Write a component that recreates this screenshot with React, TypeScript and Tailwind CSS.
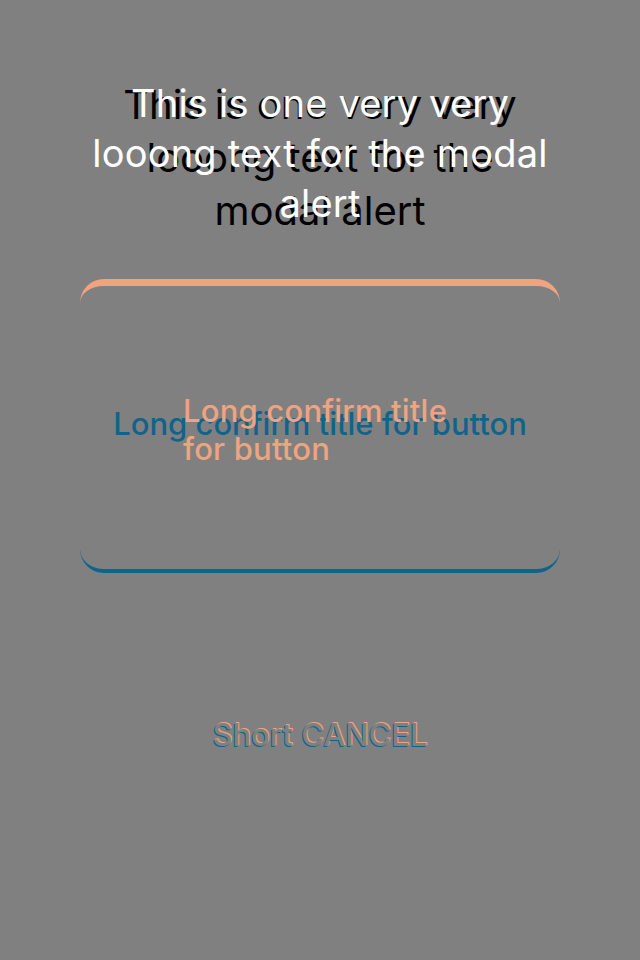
import React from "react";

const whiteLines = ["This is one very very", "looong text for the modal", "alert"];
const blackLines = ["This is one very very", "looong text for the", "modal alert"];

export default function App() {
	return (
		<div className="flex h-[960px] w-full flex-col items-center bg-[#808080] font-['Inter',sans-serif]">
			{/* title, two renders on top of each other */}
			<div className="mt-[78px] grid w-[480px] text-center">
				<div className="col-start-1 row-start-1 text-[40px] leading-[53px] text-black">
					{blackLines.map((l) => (
						<div key={l}>{l}</div>
					))}
				</div>
				<div className="col-start-1 row-start-1 text-[38px] leading-[50px] tracking-[0.2px] text-white">
					{whiteLines.map((l) => (
						<div key={l}>{l}</div>
					))}
				</div>
			</div>

			{/* confirm button */}
			<div className="mt-[42px] grid h-[294px] w-[480px] place-items-center rounded-[24px] border-t-[7px] border-b-[4px] border-t-[#efa381] border-b-[#10638a]">
				<div className="col-start-1 row-start-1 pb-[6px] text-[31px] font-medium text-[#10638a]">
					Long confirm title for button
				</div>
				<div className="col-start-1 row-start-1 ml-[103px] w-[300px] justify-self-start pt-[4px] text-[31px] leading-[38px] font-medium tracking-[0.2px] text-[#efa381]">
					Long confirm title
					<br />
					for button
				</div>
			</div>

			{/* cancel button */}
			<div className="mt-[146px] text-[31px] leading-[32px] font-medium text-[#808080] [text-shadow:-1px_1px_0_#10638a,1px_-1px_0_#efa381]">
				Short CANCEL
			</div>
		</div>
	);
}
